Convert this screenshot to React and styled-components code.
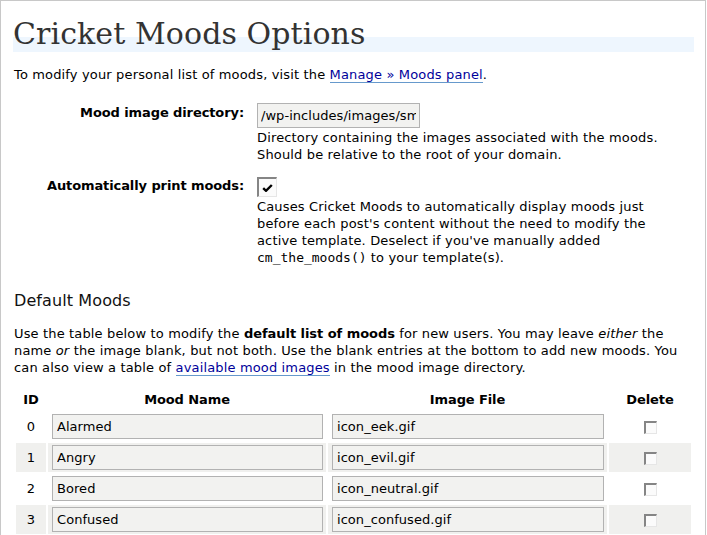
import styled, { createGlobalStyle } from "styled-components";

const GlobalStyle = createGlobalStyle`
  html, body {
    margin: 0;
    padding: 0;
    background: #fff;
  }
  body {
    font: 13px/17px "DejaVu Sans", Verdana, sans-serif;
    letter-spacing: 0.15px;
    color: #000;
  }
`;

const Wrap = styled.div`
  width: 706px;
  min-height: 535px;
  box-sizing: border-box;
  border: 1px solid #c8c8c8;
  border-bottom: none;
  padding: 0 12px 0 13px;
`;

const Title = styled.h2`
  margin: 18px -1px 0;
  padding: 0 0 3px;
  font: normal 30px/30px "DejaVu Serif", Georgia, serif;
  letter-spacing: 0.1px;
  color: #333;
  background: linear-gradient(
    to bottom,
    transparent calc(100% - 15px),
    #eef6fe calc(100% - 15px)
  );
`;

const Para = styled.p`
  margin: ${(p) => p.$top || 0}px 0 0;

  strong {
    letter-spacing: -0.05px;
  }
`;

const Link = styled.a`
  color: #00019b;
  text-decoration: none;
  border-bottom: 1px solid #69c;
  cursor: pointer;
`;

const Options = styled.div`
  margin-top: 19px;
  display: flex;
  flex-direction: column;
  gap: 13px;
`;

const OptionRow = styled.div`
  display: grid;
  grid-template-columns: 230px 1fr;
  column-gap: 12px;
`;

const OptionLabel = styled.div`
  text-align: right;
  font-weight: bold;
  letter-spacing: -0.1px;
  padding-top: ${(p) => p.$offset || 0}px;
`;

const Field = styled.div`
  display: flex;
  flex-direction: column;
  align-items: flex-start;
`;

const Hint = styled.div`
  margin-left: 1px;
`;

const Code = styled.code`
  font: 13px "DejaVu Sans Mono", "Liberation Mono", monospace;
  letter-spacing: 0;
`;

const TextInput = styled.input`
  display: block;
  box-sizing: border-box;
  width: ${(p) => p.$width || "calc(100% - 2px)"};
  height: 25px;
  margin: 1px;
  padding: 0 ${(p) => p.$pad || 4}px;
  border: 1px solid #b2b2b2;
  background: #f2f2f0;
  color: #000;
  font: 13px "DejaVu Sans", Verdana, sans-serif;
  letter-spacing: 0.05px;
  outline: none;
`;

const CheckBox = styled.span`
  display: inline-flex;
  align-items: center;
  justify-content: center;
  box-sizing: border-box;
  width: ${(p) => p.$size}px;
  height: ${(p) => p.$size}px;
  margin: ${(p) => (p.$size > 13 ? 1 : 0)}px;
  border-top: 2px solid #858585;
  border-left: 2px solid #858585;
  border-right: 1px solid #e6e6e6;
  border-bottom: 1px solid #e6e6e6;
  background: #fbfbfb;
  vertical-align: middle;
`;

const SectionTitle = styled.h3`
  margin: 25px 0 0;
  font: normal 16px/20px "DejaVu Sans", Verdana, sans-serif;
  letter-spacing: 0.1px;
  color: #111;
`;

const Table = styled.table`
  width: 100%;
  margin-top: 11px;
  border-spacing: 2px;
  table-layout: fixed;
`;

const Th = styled.th`
  padding: 2px 0;
  font-weight: bold;
  letter-spacing: -0.1px;
  text-align: center;
  line-height: 17px;
`;

const Tr = styled.tr`
  background: ${(p) => (p.$alt ? "#f0f0ee" : "transparent")};
`;

const Td = styled.td`
  padding: 1px ${(p) => (p.$center ? 0 : "2px 1px 3px")};
  text-align: ${(p) => (p.$center ? "center" : "left")};
  vertical-align: middle;
  height: 29px;
  box-sizing: border-box;
`;

const moods = [
  { id: 0, name: "Alarmed", file: "icon_eek.gif" },
  { id: 1, name: "Angry", file: "icon_evil.gif" },
  { id: 2, name: "Bored", file: "icon_neutral.gif" },
  { id: 3, name: "Confused", file: "icon_confused.gif" },
];

function CheckMark() {
  return (
    <svg width="11" height="8" viewBox="0 0 11 8">
      <path
        d="M1.2 4.2 L4 6.8 L9.8 1"
        fill="none"
        stroke="#000"
        strokeWidth="2.4"
      />
    </svg>
  );
}

export default function App() {
  return (
    <>
      <GlobalStyle />
      <Wrap>
        <Title>Cricket Moods Options</Title>
        <Para $top={14}>
          To modify your personal list of moods, visit the{" "}
          <Link>Manage &raquo; Moods panel</Link>.
        </Para>

        <Options>
          <OptionRow>
            <OptionLabel $offset={2}>Mood image directory:</OptionLabel>
            <Field>
              <TextInput
                $width="163px"
                $pad={3}
                readOnly
                value="/wp-includes/images/smilies/"
              />
              <Hint>
                Directory containing the images associated with the moods.
                <br />
                Should be relative to the root of your domain.
              </Hint>
            </Field>
          </OptionRow>
          <OptionRow>
            <OptionLabel $offset={1}>Automatically print moods:</OptionLabel>
            <Field>
              <CheckBox $size={20}>
                <CheckMark />
              </CheckBox>
              <Hint>
                Causes Cricket Moods to automatically display moods just
                <br />
                before each post's content without the need to modify the
                <br />
                active template. Deselect if you've manually added
                <br />
                <Code>cm_the_moods()</Code> to your template(s).
              </Hint>
            </Field>
          </OptionRow>
        </Options>

        <SectionTitle>Default Moods</SectionTitle>
        <Para $top={14}>
          Use the table below to modify the <strong>default list of moods</strong>{" "}
          for new users. You may leave <em>either</em> the name <em>or</em> the
          image blank, but not both. Use the blank entries at the bottom to add
          new moods. You can also view a table of{" "}
          <Link>available mood images</Link> in the mood image directory.
        </Para>

        <Table>
          <colgroup>
            <col style={{ width: 30 }} />
            <col style={{ width: 278 }} />
            <col style={{ width: 279 }} />
            <col style={{ width: 82 }} />
          </colgroup>
          <thead>
            <tr>
              <Th>ID</Th>
              <Th>Mood Name</Th>
              <Th>Image File</Th>
              <Th>Delete</Th>
            </tr>
          </thead>
          <tbody>
            {moods.map((m, i) => (
              <Tr key={m.id} $alt={i % 2 === 1}>
                <Td $center>{m.id}</Td>
                <Td>
                  <TextInput readOnly value={m.name} />
                </Td>
                <Td>
                  <TextInput readOnly value={m.file} />
                </Td>
                <Td $center>
                  <CheckBox $size={13} />
                </Td>
              </Tr>
            ))}
          </tbody>
        </Table>
      </Wrap>
    </>
  );
}
